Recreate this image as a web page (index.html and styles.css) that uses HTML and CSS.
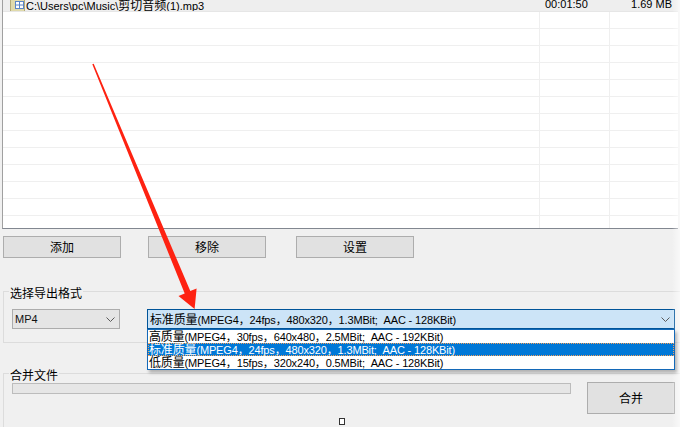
FILE: index.html
```html
<!DOCTYPE html>
<html lang="zh-CN">
<head>
<meta charset="utf-8">
<title>合并</title>
<link rel="stylesheet" href="styles.css">
</head>
<body>
<div class="page">
  <div class="list">
    <div class="row first">
      <div class="cell name"><svg class="file-ico" width="15" height="15" viewBox="0 0 15 15"><rect x="0.5" y="0.5" width="14" height="14" fill="#e0daab" stroke="#b3ab78"/><rect x="5.5" y="4.5" width="8" height="7" fill="#fff" stroke="#5a86c8"/><path d="M9.5 4.5v7M5.5 8h8" stroke="#5a86c8"/></svg>C:\Users\pc\Music\<span class="cn">剪切音频</span>(1).mp3</div>
      <div class="cell dur">00:01:50</div>
      <div class="cell size">1.69 MB</div>
    </div>
    <div class="row"><div class="cell name"></div><div class="cell dur"></div><div class="cell size"></div></div>
    <div class="row"><div class="cell name"></div><div class="cell dur"></div><div class="cell size"></div></div>
    <div class="row"><div class="cell name"></div><div class="cell dur"></div><div class="cell size"></div></div>
    <div class="row"><div class="cell name"></div><div class="cell dur"></div><div class="cell size"></div></div>
    <div class="row"><div class="cell name"></div><div class="cell dur"></div><div class="cell size"></div></div>
    <div class="row"><div class="cell name"></div><div class="cell dur"></div><div class="cell size"></div></div>
    <div class="row"><div class="cell name"></div><div class="cell dur"></div><div class="cell size"></div></div>
    <div class="row"><div class="cell name"></div><div class="cell dur"></div><div class="cell size"></div></div>
    <div class="row"><div class="cell name"></div><div class="cell dur"></div><div class="cell size"></div></div>
    <div class="row"><div class="cell name"></div><div class="cell dur"></div><div class="cell size"></div></div>
    <div class="row"><div class="cell name"></div><div class="cell dur"></div><div class="cell size"></div></div>
    <div class="row"><div class="cell name"></div><div class="cell dur"></div><div class="cell size"></div></div>
    <div class="row"><div class="cell name"></div><div class="cell dur"></div><div class="cell size"></div></div>
  </div>

  <div class="buttons">
    <button class="btn">添加</button>
    <button class="btn">移除</button>
    <button class="btn btn-set">设置</button>
  </div>

  <fieldset class="group fmt">
    <legend>选择导出格式</legend>
    <div class="combos">
      <div class="combo type"><span>MP4</span><svg class="chev" width="9" height="5" viewBox="0 0 9 5"><polyline points="0.5,0.5 4.5,4.5 8.5,0.5" fill="none" stroke="#5a5a5a"/></svg></div>
      <div class="quality-wrap">
        <div class="combo quality"><span><span class="cn">标准质量</span>(MPEG4，24fps，480x320，1.3MBit;&nbsp;&nbsp;AAC - 128KBit)</span><svg class="chev" width="9" height="5" viewBox="0 0 9 5"><polyline points="0.5,0.5 4.5,4.5 8.5,0.5" fill="none" stroke="#5a5a5a"/></svg></div>
        <ul class="dropdown">
          <li><span class="cn">高质量</span>(MPEG4，30fps，640x480，2.5MBit;&nbsp;&nbsp;AAC - 192KBit)</li>
          <li class="sel"><span class="cn">标准质量</span>(MPEG4，24fps，480x320，1.3MBit;&nbsp;&nbsp;AAC - 128KBit)</li>
          <li><span class="cn">低质量</span>(MPEG4，15fps，320x240，0.5MBit;&nbsp;&nbsp;AAC - 128KBit)</li>
        </ul>
      </div>
    </div>
  </fieldset>

  <fieldset class="group merge">
    <legend>合并文件</legend>
    <div class="merge-row">
      <div class="progress"></div>
      <button class="btn merge-btn">合并</button>
    </div>
  </fieldset>

  <span class="caret"></span>
  <div class="edge"></div>
  <svg class="arrow" width="680" height="427" viewBox="0 0 680 427">
    <polygon points="93.7,63.7 190.3,291.1 196.6,288.6 194.6,309 178.5,296 184.7,293.5 92.3,64.3" fill="#fe2211"/>
  </svg>
</div>
</body>
</html>
```

FILE: styles.css
```css
body {
  margin: 0;
  background: #f0f0f0;
  font-family: "Liberation Sans", "Noto Sans CJK SC", sans-serif;
  font-size: 11px;
  color: #000;
}

.page {
  position: relative;
  width: 680px;
  height: 427px;
  overflow: hidden;
}

.cn {
  font-family: "Noto Sans CJK SC", sans-serif;
  font-size: 12px;
  line-height: 12px;
}

/* list view */
.list {
  margin: -5px 2px 0 2px;
  height: 233px;
  background: #fff;
  border-left: 1px solid #a0a0a0;
  border-bottom: 1px solid #828790;
  overflow: hidden;
}

.row {
  display: grid;
  grid-template-columns: 536px 70px 1fr;
  height: 16px;
  border-bottom: 1px solid #efefef;
}

.row.first {
  background: #eeeeee;
  border-bottom-color: #e6e6e6;
}

.cell {
  height: 16px;
  box-sizing: border-box;
  line-height: 16px;
  white-space: nowrap;
  overflow: hidden;
}

.row.first .cell {
  padding-top: 2px;
  line-height: 14px;
}

.cell.dur,
.cell.size {
  border-left: 1px solid #efefef;
}

.row.first .cell.dur,
.row.first .cell.size {
  border-left-color: transparent;
}

.name {
  padding-left: 7px;
}

.file-ico {
  vertical-align: -2px;
  margin-right: 1px;
}

.dur {
  padding-left: 5px;
}

.size {
  text-align: right;
  padding-right: 6px;
}

/* buttons */
.buttons {
  display: flex;
  margin: 7px 0 0 3px;
}

.btn {
  width: 118px;
  height: 22px;
  padding: 0;
  background: #e1e1e1;
  border: 1px solid #adadad;
  font-family: "Noto Sans CJK SC", sans-serif;
  font-size: 12px;
  line-height: 16px;
  color: #000;
}

.btn + .btn {
  margin-left: 27px;
}

.btn.btn-set {
  margin-left: 30px;
}

/* group boxes */
.group {
  margin: 23px 0 0 3px;
  padding: 8px 0 13px 8px;
  border: 1px solid #dcdcdc;
  width: 690px;
  box-sizing: border-box;
  min-width: 0;
}

.group legend {
  padding: 4px 1px 0;
  margin-left: -3px;
  font-family: "Noto Sans CJK SC", sans-serif;
  font-size: 12px;
  line-height: 16px;
}

.combos {
  display: flex;
}

.combo {
  height: 20px;
  box-sizing: border-box;
  border: 1px solid;
  display: flex;
  align-items: center;
  justify-content: space-between;
  padding: 0 4px 0 2px;
  white-space: nowrap;
}

.combo.type {
  width: 108px;
  background: #e5e5e5;
  border-color: #acacac;
  color: #111;
}

.quality-wrap {
  position: relative;
  margin-left: 27px;
  width: 528px;
}

.combo.quality {
  background: #cce4f7;
  border-color: #005499;
  letter-spacing: -0.15px;
}

.dropdown {
  position: absolute;
  top: 100%;
  left: 0;
  right: 0;
  margin: 0;
  padding: 0;
  list-style: none;
  background: #fff;
  border: 1px solid #1469b8;
  box-shadow: 2px 3px 3px rgba(0, 0, 0, 0.25);
  z-index: 2;
}

.dropdown li {
  height: 13px;
  line-height: 13px;
  padding-left: 1px;
  white-space: nowrap;
  overflow: hidden;
  letter-spacing: -0.15px;
}

.dropdown li.sel {
  background: #0078d7;
  color: #fff;
  outline: 1px dotted #f5a05a;
  outline-offset: -1px;
}

.group.merge {
  margin-top: 20px;
  padding: 0 0 20px 8px;
}

.merge-row {
  display: flex;
  align-items: flex-start;
  margin-top: -1px;
}

.progress {
  width: 559px;
  height: 11px;
  box-sizing: border-box;
  margin-top: 1px;
  background: #e6e6e6;
  border: 1px solid #bcbcbc;
}

.btn.merge-btn {
  width: 88px;
  height: 32px;
  margin-left: 16px;
}

/* overlays */
.caret {
  position: absolute;
  left: 339px;
  top: 418px;
  width: 4px;
  height: 5px;
  border: 1px solid #333;
  background: #fff;
}

.edge {
  position: absolute;
  top: 0;
  right: 0;
  width: 8px;
  height: 100%;
  background: linear-gradient(to right, rgba(255, 255, 255, 0), rgba(255, 255, 255, 0.6));
  pointer-events: none;
}

.arrow {
  position: absolute;
  left: 0;
  top: 0;
  pointer-events: none;
  z-index: 3;
}
```
